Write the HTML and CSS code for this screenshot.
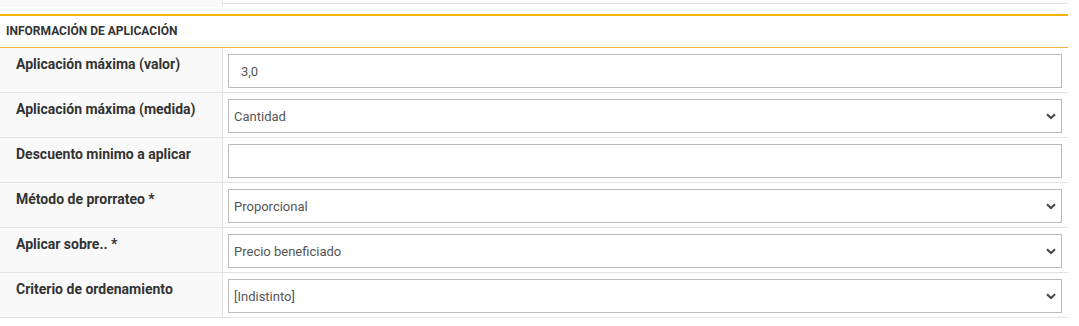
FILE: index.html
```html
<!DOCTYPE html>
<html lang="es">
  <head>
    <meta charset="utf-8" />
    <link rel="stylesheet" href="styles.css">
  </head>

  <body>
    <div class="panel">
      <!-- resto de la sección anterior -->
      <div class="row prev-row">
        <div class="label"></div>
        <div class="field"></div>
      </div>

      <div class="section">
        <div class="section-title">Información de aplicación</div>

        <div class="row">
          <div class="label">Aplicación máxima (valor)</div>
          <div class="field"><input class="control" type="text" value="3,0"></div>
        </div>

        <div class="row">
          <div class="label">Aplicación máxima (medida)</div>
          <div class="field">
            <div class="select-wrap">
              <select class="control select"><option>Cantidad</option></select>
              <svg class="chevron" width="10" height="7" viewBox="0 0 10 7"><path d="M1 1.2 L5 5 L9 1.2" fill="none" stroke="#4a4a4a" stroke-width="2.2"/></svg>
            </div>
          </div>
        </div>

        <div class="row">
          <div class="label">Descuento minimo a aplicar</div>
          <div class="field"><input class="control" type="text" value=""></div>
        </div>

        <div class="row">
          <div class="label">Método de prorrateo *</div>
          <div class="field">
            <div class="select-wrap">
              <select class="control select"><option>Proporcional</option></select>
              <svg class="chevron" width="10" height="7" viewBox="0 0 10 7"><path d="M1 1.2 L5 5 L9 1.2" fill="none" stroke="#4a4a4a" stroke-width="2.2"/></svg>
            </div>
          </div>
        </div>

        <div class="row">
          <div class="label">Aplicar sobre.. *</div>
          <div class="field">
            <div class="select-wrap">
              <select class="control select"><option>Precio beneficiado</option></select>
              <svg class="chevron" width="10" height="7" viewBox="0 0 10 7"><path d="M1 1.2 L5 5 L9 1.2" fill="none" stroke="#4a4a4a" stroke-width="2.2"/></svg>
            </div>
          </div>
        </div>

        <div class="row">
          <div class="label">Criterio de ordenamiento</div>
          <div class="field">
            <div class="select-wrap">
              <select class="control select"><option>[Indistinto]</option></select>
              <svg class="chevron" width="10" height="7" viewBox="0 0 10 7"><path d="M1 1.2 L5 5 L9 1.2" fill="none" stroke="#4a4a4a" stroke-width="2.2"/></svg>
            </div>
          </div>
        </div>
      </div>
    </div>
  </body>
</html>
```

FILE: styles.css
```css
body {
  margin: 0;
  background: #fff;
  font-family: Roboto, "Liberation Sans", Arial, sans-serif;
  color: #333;
}

.panel {
  width: 1068px;
}

.row {
  display: flex;
  border-bottom: 1px solid #e2e2e2;
}

.prev-row {
  height: 3px;
}

.label {
  width: 206px;
  flex-shrink: 0;
  padding: 7px 0 0 16px;
  background: #f9f9f9;
  border-right: 1px solid #e2e2e2;
  font-size: 14px;
  font-weight: bold;
  line-height: 19px;
  color: #333;
}

.field {
  flex: 1;
  padding: 6px 6px 4px 5px;
}

.prev-row .field {
  padding: 0;
}

.section {
  margin-top: 10px;
  border-top: 2px solid #f7b500;
}

.section-title {
  height: 31px;
  line-height: 31px;
  padding-left: 6px;
  font-size: 12px;
  font-weight: bold;
  text-transform: uppercase;
  color: #333;
  border-bottom: 1px solid #f2b53a;
}

.control {
  display: block;
  box-sizing: border-box;
  width: 100%;
  height: 34px;
  margin: 0;
  border: 1px solid #bababa;
  border-radius: 0;
  background: #fff;
  font-family: Roboto, "Liberation Sans", Arial, sans-serif;
  font-size: 13px;
  color: #555;
  padding: 0 12px;
  outline: none;
}

.select-wrap {
  position: relative;
}

.select {
  appearance: none;
  -webkit-appearance: none;
  padding: 0 30px 0 5px;
}

.chevron {
  position: absolute;
  right: 6px;
  top: 14px;
  pointer-events: none;
}
```
